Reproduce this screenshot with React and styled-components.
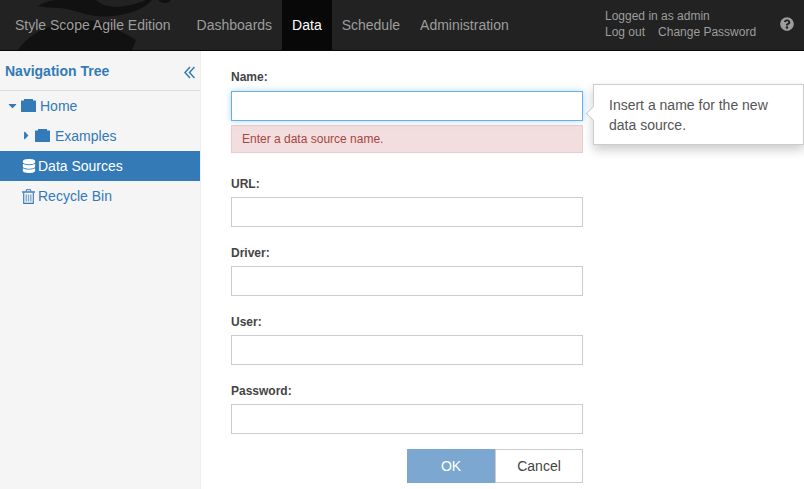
import React from 'react'
import styled, { createGlobalStyle } from 'styled-components'
import { FaCaretDown, FaCaretRight, FaDatabase, FaQuestionCircle } from 'react-icons/fa'

const GlobalStyle = createGlobalStyle`
  html, body {
    margin: 0;
    padding: 0;
    background: #fff;
    height: 100%;
    overflow: hidden;
  }
  * {
    box-sizing: border-box;
  }
`

const FolderIcon = () => (
  <FolderSvg width="15" height="13" viewBox="0 0 15 13">
    <path d="M3 0h9v1.6h2.6q.4 0 .4.4V12.6q0 .4-.4.4H.4q-.4 0-.4-.4V2q0-.4.4-.4H3z" fill="#337ab7" />
  </FolderSvg>
)

const TrashIcon = () => (
  <svg width="13" height="15" viewBox="0 0 13 15" fill="none">
    <path d="M0 3h13" stroke="#337ab7" strokeWidth="1.4" />
    <path d="M4.3 2.5V0.7h4.4v1.8" stroke="#337ab7" strokeWidth="1" />
    <path d="M1.7 3.5v10.9h9.6V3.5" stroke="#337ab7" strokeWidth="1.1" />
    <path d="M4.2 5.5v7M6.5 5.5v7M8.8 5.5v7" stroke="#7fa9cf" strokeWidth="1.4" />
  </svg>
)

const CollapseIcon = () => (
  <svg width="11" height="13" viewBox="0 0 11 13" fill="none" stroke="#337ab7" strokeWidth="1.5">
    <path d="M6 1L1 6.5L6 12" />
    <path d="M10.5 1L5.5 6.5L10.5 12" />
  </svg>
)

const BrandMark = () => (
  <Mark viewBox="0 0 190 50" width="190" height="50">
    <path d="M38 6C44 2 50 0 56 0H96C104 8 122 10 146 0H152C140 14 112 18 96 16C80 14 70 8 58 8C50 8 44 7 38 6Z" />
    <path d="M18 50C26 38 40 28 60 24C80 20 96 18 110 26C122 32 130 36 136 40L132 50Z" />
    <path d="M158 0h13c-2 3-8 5-13 0z" />
  </Mark>
)

const App = () => {
  const fields = ['URL:', 'Driver:', 'User:', 'Password:']

  return (
    <Page>
      <GlobalStyle />
      <Header>
        <BrandMark />
        <Brand>Style Scope Agile Edition</Brand>
        <NavItem>Dashboards</NavItem>
        <NavItem $active>Data</NavItem>
        <NavItem>Schedule</NavItem>
        <NavItem>Administration</NavItem>
        <UserBox>
          <div>Logged in as admin</div>
          <UserLinks>
            <span>Log out</span>
            <span>Change Password</span>
          </UserLinks>
        </UserBox>
        <HelpButton>
          <FaQuestionCircle />
        </HelpButton>
      </Header>
      <Body>
        <Sidebar>
          <TreeTitle>
            <span>Navigation Tree</span>
            <CollapseIcon />
          </TreeTitle>
          <TreeRow $indent={6}>
            <Caret><FaCaretDown /></Caret>
            <FolderIcon />
            <TreeLabel $gap={4}>Home</TreeLabel>
          </TreeRow>
          <TreeRow $indent={20}>
            <Caret><FaCaretRight /></Caret>
            <FolderIcon />
            <TreeLabel $gap={5}>Examples</TreeLabel>
          </TreeRow>
          <TreeRow $indent={22} $selected>
            <FaDatabase size={14} />
            <TreeLabel $gap={2}>Data Sources</TreeLabel>
          </TreeRow>
          <TreeRow $indent={22}>
            <TrashIcon />
            <TreeLabel $gap={3}>Recycle Bin</TreeLabel>
          </TreeRow>
        </Sidebar>
        <Content>
          <Form>
            <Label>Name:</Label>
            <NameField>
              <TextInput $focused />
              <Tip>
                <TipArrow />
                Insert a name for the new data source.
              </Tip>
            </NameField>
            <ErrorBox>Enter a data source name.</ErrorBox>
            {fields.map((field) => (
              <Field key={field}>
                <FieldLabel>{field}</FieldLabel>
                <TextInput />
              </Field>
            ))}
            <Buttons>
              <OkButton>OK</OkButton>
              <CancelButton>Cancel</CancelButton>
            </Buttons>
          </Form>
        </Content>
      </Body>
    </Page>
  )
}

export default App

const Page = styled.div`
  width: 804px;
  height: 489px;
  overflow: hidden;
  display: flex;
  flex-direction: column;
  font-family: "Liberation Sans", Arial, sans-serif;
  font-size: 14px;
  color: #333;
`

const Header = styled.header`
  position: relative;
  height: 51px;
  flex: none;
  display: flex;
  align-items: stretch;
  background: #222;
  border-bottom: 1px solid #080808;
  color: #9d9d9d;
`

const Mark = styled.svg`
  position: absolute;
  left: 0;
  top: 0;
  fill: #111;
`

const Brand = styled.div`
  position: relative;
  width: 186.6px;
  padding-left: 15px;
  line-height: 50px;
  font-size: 14px;
  white-space: nowrap;
`

const NavItem = styled.div`
  position: relative;
  padding: 0 10px;
  line-height: 50px;
  white-space: nowrap;
  color: ${(p) => (p.$active ? '#fff' : '#9d9d9d')};
  background: ${(p) => (p.$active ? '#080808' : 'transparent')};
`

const UserBox = styled.div`
  margin-left: auto;
  width: 175px;
  padding-top: 8px;
  font-size: 12px;
  line-height: 16px;
`

const UserLinks = styled.div`
  display: flex;
  gap: 13px;
`

const HelpButton = styled.div`
  width: 24px;
  padding-top: 17px;
  font-size: 14px;
  svg {
    display: block;
  }
`

const Body = styled.div`
  flex: 1;
  display: flex;
  min-height: 0;
`

const Sidebar = styled.aside`
  width: 201px;
  flex: none;
  background: #f5f5f5;
  border-right: 1px solid #eee;
`

const TreeTitle = styled.div`
  height: 40px;
  padding: 0 5px;
  display: flex;
  align-items: center;
  justify-content: space-between;
  border-bottom: 1px solid #ddd;
  color: #337ab7;
  font-size: 14px;
  font-weight: bold;
  svg {
    margin-top: 3px;
  }
`

const TreeRow = styled.div`
  height: 30px;
  display: flex;
  align-items: center;
  padding-left: ${(p) => p.$indent}px;
  background: ${(p) => (p.$selected ? '#337ab7' : 'transparent')};
  color: ${(p) => (p.$selected ? '#fff' : '#337ab7')};
`

const Caret = styled.span`
  width: 15px;
  display: flex;
  align-items: center;
  font-size: 13px;
  margin-top: -1px;
`

const FolderSvg = styled.svg`
  margin-top: -1px;
`

const TreeLabel = styled.span`
  margin-left: ${(p) => p.$gap}px;
`

const Content = styled.main`
  flex: 1;
  padding: 19px 0 0 30px;
`

const Form = styled.div`
  width: 352px;
`

const Label = styled.div`
  font-size: 12px;
  font-weight: bold;
  line-height: 14px;
  margin-bottom: 7px;
  color: #444;
`

const FieldLabel = styled(Label)`
  margin-bottom: 6px;
`

const Field = styled.div`
  margin-top: 24px;
  & + & {
    margin-top: 19px;
  }
`

const NameField = styled.div`
  position: relative;
`

const TextInput = styled.div`
  height: 30px;
  background: #fff;
  border: 1px solid ${(p) => (p.$focused ? '#66afe9' : '#ccc')};
  box-shadow: ${(p) => (p.$focused ? '0 0 6px rgba(102, 175, 233, 0.5)' : 'none')};
`

const ErrorBox = styled.div`
  margin-top: 4px;
  height: 28px;
  padding-left: 10px;
  line-height: 26px;
  font-size: 12px;
  color: #a94442;
  background: #f2dede;
  border: 1px solid #ebcccc;
`

const Tip = styled.div`
  position: absolute;
  left: 362px;
  top: -7px;
  width: 211px;
  height: 61px;
  padding: 10px 15px;
  font-size: 14px;
  line-height: 20px;
  color: #555;
  background: #fff;
  border: 1px solid #ccc;
  box-shadow: 0 5px 10px rgba(0, 0, 0, 0.2);
`

const TipArrow = styled.span`
  position: absolute;
  left: -6px;
  top: 23px;
  width: 11px;
  height: 11px;
  background: #fff;
  border-left: 1px solid #ccc;
  border-bottom: 1px solid #ccc;
  transform: rotate(45deg);
`

const Buttons = styled.div`
  display: flex;
  justify-content: flex-end;
  margin-top: 15px;
`

const OkButton = styled.div`
  width: 88px;
  height: 34px;
  line-height: 34px;
  text-align: center;
  color: #fff;
  background: #7ba7d0;
`

const CancelButton = styled.div`
  width: 88px;
  height: 34px;
  line-height: 32px;
  text-align: center;
  color: #444;
  background: #fff;
  border: 1px solid #ccc;
`
